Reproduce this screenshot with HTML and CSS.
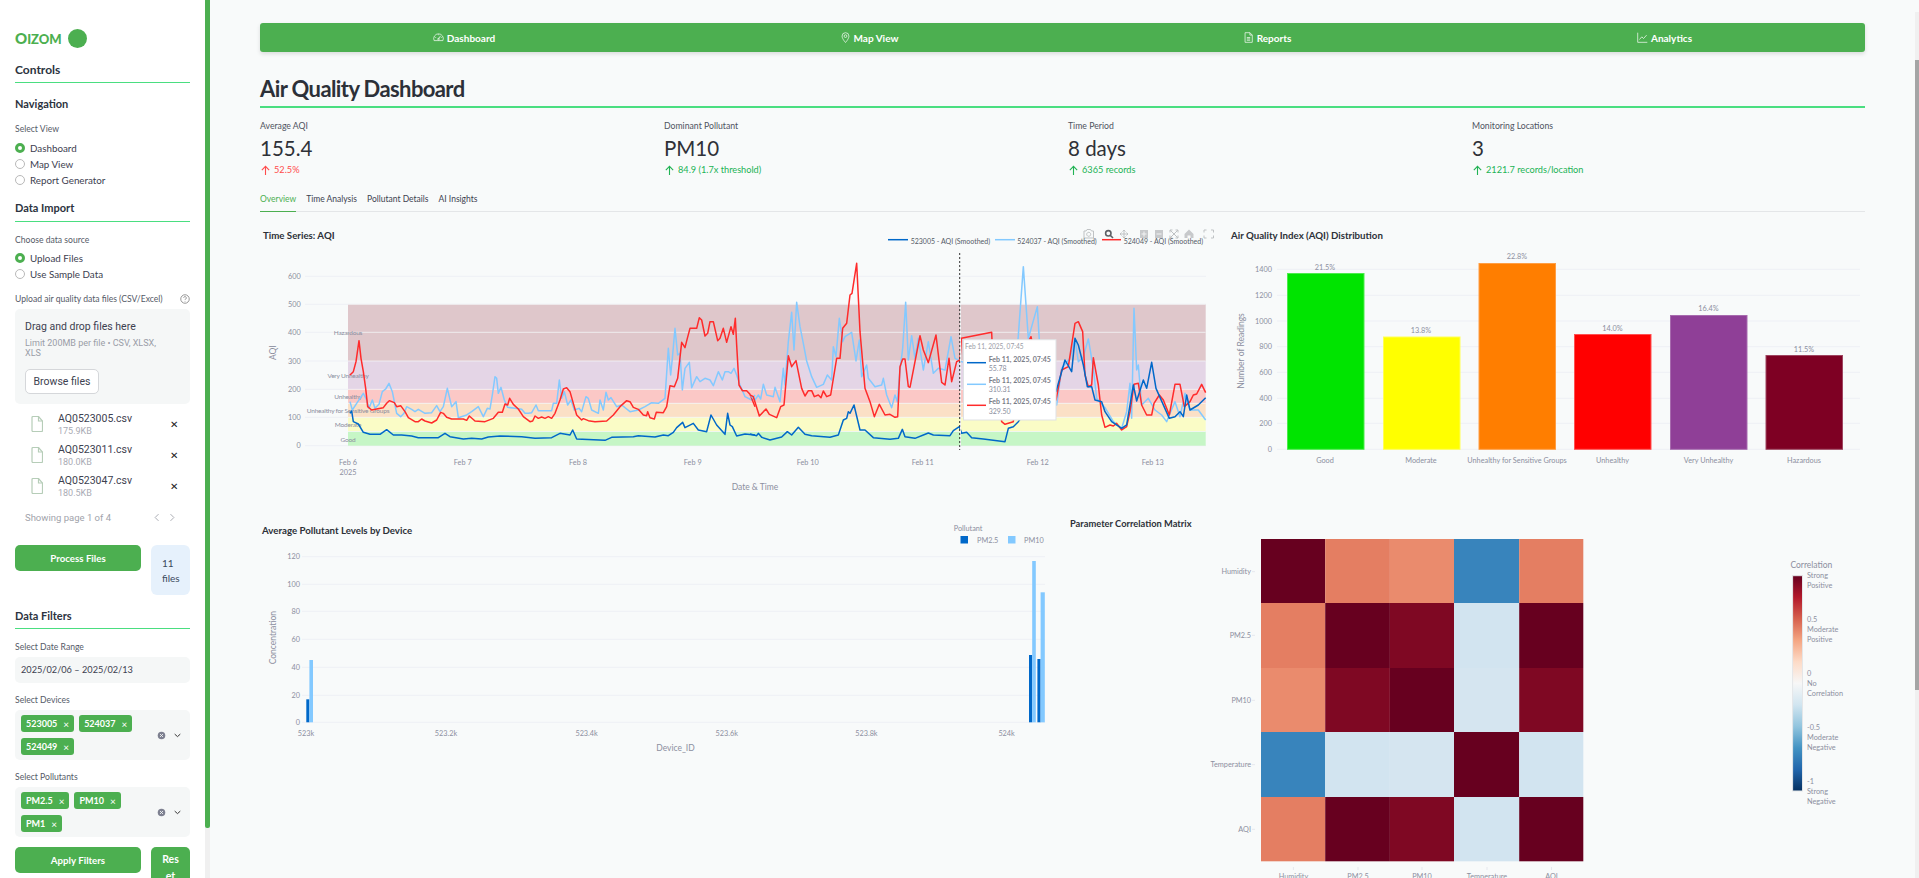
FILE: index.html
```html
<!DOCTYPE html>
<html lang="en">
<head>
<meta charset="utf-8">
<title>Air Quality Dashboard</title>
<link rel="stylesheet" href="styles.css">
</head>
<body>
<div class="app">
<aside class="sidebar">
  <div class="logo"><span class="logo-word">Oizom</span><span class="logo-dot"></span></div>
  <h2 class="sec sec-controls">Controls</h2>
  <h3 class="sub sub-nav">Navigation</h3>
  <div class="lbl lbl-view">Select View</div>
  <div class="radios radios-view">
    <div class="radio on"><i></i>Dashboard</div>
    <div class="radio"><i></i>Map View</div>
    <div class="radio"><i></i>Report Generator</div>
  </div>
  <h3 class="sub sec sec-import">Data Import</h3>
  <div class="lbl lbl-source">Choose data source</div>
  <div class="radios radios-source">
    <div class="radio on"><i></i>Upload Files</div>
    <div class="radio"><i></i>Use Sample Data</div>
  </div>
  <div class="lbl lbl-upload"><span>Upload air quality data files (CSV/Excel)</span>
    <svg class="help" viewBox="0 0 16 16"><circle cx="8" cy="8" r="6.8"/><path d="M5.9 6.2a2.1 2.1 0 1 1 3.2 1.8c-.7.4-1.1.8-1.1 1.7"/><path d="M8 11.4v.9"/></svg>
  </div>
  <div class="drop">
    <div class="drop-title">Drag and drop files here</div>
    <div class="drop-limit">Limit 200MB per file • CSV, XLSX, XLS</div>
    <button class="browse">Browse files</button>
  </div>
  <div class="files">
    <div class="file">
      <svg class="file-ic" viewBox="0 0 12 16"><path d="M1 1.5a1 1 0 0 1 1-1h5.5L11.5 5v9.5a1 1 0 0 1-1 1H2a1 1 0 0 1-1-1z"/><path d="M7.5.5V5h4"/></svg>
      <div class="file-txt"><div class="file-name">AQ0523005.csv</div><div class="file-size">175.9KB</div></div>
      <span class="file-x">✕</span>
    </div>
    <div class="file">
      <svg class="file-ic" viewBox="0 0 12 16"><path d="M1 1.5a1 1 0 0 1 1-1h5.5L11.5 5v9.5a1 1 0 0 1-1 1H2a1 1 0 0 1-1-1z"/><path d="M7.5.5V5h4"/></svg>
      <div class="file-txt"><div class="file-name">AQ0523011.csv</div><div class="file-size">180.0KB</div></div>
      <span class="file-x">✕</span>
    </div>
    <div class="file">
      <svg class="file-ic" viewBox="0 0 12 16"><path d="M1 1.5a1 1 0 0 1 1-1h5.5L11.5 5v9.5a1 1 0 0 1-1 1H2a1 1 0 0 1-1-1z"/><path d="M7.5.5V5h4"/></svg>
      <div class="file-txt"><div class="file-name">AQ0523047.csv</div><div class="file-size">180.5KB</div></div>
      <span class="file-x">✕</span>
    </div>
  </div>
  <div class="pager"><span>Showing page 1 of 4</span>
    <svg class="chev" viewBox="0 0 8 12"><path d="M6 1.5 1.5 6 6 10.5"/></svg>
    <svg class="chev" viewBox="0 0 8 12"><path d="M2 1.5 6.5 6 2 10.5"/></svg>
  </div>
  <div class="act-row act-process">
    <button class="btn btn-main">Process Files</button>
    <div class="count">11 files</div>
  </div>
  <h3 class="sub sec sec-filters">Data Filters</h3>
  <div class="lbl lbl-date">Select Date Range</div>
  <div class="date">2025/02/06 – 2025/02/13</div>
  <div class="lbl lbl-multi">Select Devices</div>
  <div class="multi">
    <div class="tags">
      <span class="tag">523005<b>×</b></span><span class="tag">524037<b>×</b></span><span class="tag">524049<b>×</b></span>
    </div>
    <svg class="clear" viewBox="0 0 10 10"><circle cx="5" cy="5" r="4.2"/><path d="M3.4 3.4l3.2 3.2M6.6 3.4 3.4 6.6"/></svg>
    <svg class="drop-chev" viewBox="0 0 10 6"><path d="M1 1l4 3.6L9 1"/></svg>
  </div>
  <div class="lbl lbl-multi">Select Pollutants</div>
  <div class="multi">
    <div class="tags">
      <span class="tag">PM2.5<b>×</b></span><span class="tag">PM10<b>×</b></span><span class="tag">PM1<b>×</b></span>
    </div>
    <svg class="clear" viewBox="0 0 10 10"><circle cx="5" cy="5" r="4.2"/><path d="M3.4 3.4l3.2 3.2M6.6 3.4 3.4 6.6"/></svg>
    <svg class="drop-chev" viewBox="0 0 10 6"><path d="M1 1l4 3.6L9 1"/></svg>
  </div>
  <div class="act-row act-apply">
    <button class="btn btn-main">Apply Filters</button>
    <button class="btn btn-reset">Res<wbr>et</button>
  </div>
</aside>
<div class="side-scroll"><div class="side-thumb"></div></div>

<main class="main">
  <nav class="topnav">
    <a class="tab-link"><svg viewBox="0 0 16 16"><path d="M1.6 12.5a7 7 0 1 1 12.8 0z"/><path d="M8 10l3-4.5"/><circle cx="8" cy="10.3" r="1.2"/><path d="M8 3.4v1.2M3.4 8h1.2M11.4 8h1.2"/></svg>Dashboard</a>
    <a class="tab-link"><svg viewBox="0 0 16 16"><path d="M8 15.3S13 9.8 13 6A5 5 0 0 0 3 6c0 3.8 5 9.3 5 9.3z"/><circle cx="8" cy="6" r="2"/></svg>Map View</a>
    <a class="tab-link"><svg viewBox="0 0 16 16"><path d="M3 1h7l3.5 3.5V15H3z"/><path d="M10 1v3.5h3.5M5.5 8h5M5.5 10h5M5.5 12h5"/></svg>Reports</a>
    <a class="tab-link"><svg viewBox="0 0 16 16"><path d="M1 1v14h14"/><path d="M3.5 11 7 7l2.500 2.500L14 4.500"/></svg>Analytics</a>
  </nav>
  <h1 class="title">Air Quality Dashboard</h1>
  <section class="metrics">
    <div class="metric"><div class="m-label">Average AQI</div><div class="m-value">155.4</div>
      <div class="m-delta bad"><svg viewBox="0 0 12 12"><path d="M6 11V1.500M2 5.500l4-4 4 4"/></svg>52.5%</div></div>
    <div class="metric"><div class="m-label">Dominant Pollutant</div><div class="m-value">PM10</div>
      <div class="m-delta good"><svg viewBox="0 0 12 12"><path d="M6 11V1.500M2 5.500l4-4 4 4"/></svg>84.9 (1.7x threshold)</div></div>
    <div class="metric"><div class="m-label">Time Period</div><div class="m-value">8 days</div>
      <div class="m-delta good"><svg viewBox="0 0 12 12"><path d="M6 11V1.500M2 5.500l4-4 4 4"/></svg>6365 records</div></div>
    <div class="metric"><div class="m-label">Monitoring Locations</div><div class="m-value">3</div>
      <div class="m-delta good"><svg viewBox="0 0 12 12"><path d="M6 11V1.500M2 5.500l4-4 4 4"/></svg>2121.7 records/location</div></div>
  </section>
  <div class="tabs">
    <span class="tab active">Overview</span><span class="tab">Time Analysis</span><span class="tab">Pollutant Details</span><span class="tab">AI Insights</span>
  </div>

  <div class="chart-row row-one">
    <svg class="chart chart-ts" viewBox="260 225 965 280">
      <text class="c-title" x="263" y="235">Time Series: AQI</text>
      <g class="grid">
        <path d="M305 276.300H1206M305 304.300H1206M305 332.300H1206M305 361H1206M305 389.300H1206M305 417.300H1206M305 445.700H1206"/>
      </g>
      <rect class="b6" x="348" y="304.300" width="857.700" height="56.700"/>
      <rect class="b5" x="348" y="361" width="857.700" height="28.300"/>
      <rect class="b4" x="348" y="389.300" width="857.700" height="14"/>
      <rect class="b3" x="348" y="403.300" width="857.700" height="14"/>
      <rect class="b2" x="348" y="417.300" width="857.700" height="14.200"/>
      <rect class="b1" x="348" y="431.500" width="857.700" height="14.200"/>
      <path class="band-line" d="M348 304.300H1205.700M348 332.300H1205.700M348 361H1205.700M348 389.300H1205.700M348 403.300H1205.700M348 417.300H1205.700M348 431.500H1205.700"/>
      <g class="tick tick-end">
        <text x="300.700" y="276.300">600</text><text x="300.700" y="304.300">500</text><text x="300.700" y="332.300">400</text><text x="300.700" y="361">300</text><text x="300.700" y="389.300">200</text><text x="300.700" y="417.300">100</text><text x="300.700" y="445.700">0</text>
      </g>
      <text class="a-title" transform="translate(273 352.700) rotate(-90)">AQI</text>
      <g class="tick tick-mid">
        <text x="348" y="462">Feb 6</text><text x="348" y="472">2025</text><text x="462.700" y="462">Feb 7</text><text x="578" y="462">Feb 8</text><text x="692.700" y="462">Feb 9</text><text x="807.700" y="462">Feb 10</text><text x="922.700" y="462">Feb 11</text><text x="1037.700" y="462">Feb 12</text><text x="1152.700" y="462">Feb 13</text>
      </g>
      <text class="a-title" x="755" y="487">Date &amp; Time</text>
      <g class="tick tick-mid band-label">
        <text x="348" y="332">Hazardous</text><text x="348" y="375">Very Unhealthy</text><text x="348" y="396">Unhealthy</text><text x="348" y="410">Unhealthy for Sensitive Groups</text><text x="348" y="424">Moderate</text><text x="348" y="439">Good</text>
      </g>
      <g transform="translate(255 225) scale(.33333)">
        <polyline class="s-light" points="285,530 292,555 305,535 325,505 335,525 342,550 352,525 360,550 372,538 382,500 392,492 402,475 412,500 425,565 437,575 447,565 455,545 470,553 480,560 490,553 510,565 530,563 545,542 555,560 565,545 577,490 590,545 603,530 610,578 635,570 650,560 670,545 685,575 697,550 705,552 712,510 720,455 725,460 730,505 738,487 748,525 758,547 780,550 800,553 810,565 820,565 830,563 843,540 850,557 890,557 895,535 905,535 913,465 920,520 928,500 938,540 948,525 958,555 972,550 980,560 993,515 1000,520 1010,555 1030,565 1035,525 1045,555 1053,502 1060,525 1068,518 1085,545 1100,540 1125,560 1150,555 1170,545 1190,533 1210,535 1230,520 1240,370 1247,450 1252,400 1260,310 1268,390 1275,385 1282,495 1290,430 1303,412 1310,488 1325,455 1335,470 1350,460 1365,465 1375,482 1390,440 1402,465 1410,440 1420,440 1428,445 1437,430 1445,450 1455,480 1470,515 1490,525 1500,510"/>
        <polyline class="s-red" points="285,450 295,440 303,410 312,347 318,400 325,440 332,490 338,545 350,555 365,552 385,548 395,535 403,527 418,533 425,545 437,542 450,560 460,578 480,590 490,590 500,582 510,588 530,594 545,585 557,562 565,565 575,577 590,582 625,582 635,586 643,573 660,588 690,590 715,580 730,562 742,562 750,537 758,540 764,520 775,538 790,552 805,575 825,590 833,588 840,573 850,580 860,576 870,580 880,575 890,580 900,565 915,525 925,492 935,488 945,500 955,535 965,570 980,585 985,581 1000,587 1020,590 1055,588 1075,570 1095,545 1115,527 1125,530 1135,547 1150,553 1165,570 1175,572 1178,560 1185,578 1198,582 1204,562 1225,563 1235,545 1245,482 1258,485 1268,460 1280,352 1290,368 1297,340 1305,310 1325,310 1333,278 1340,285 1350,333 1358,325 1365,290 1375,290 1388,347 1395,340 1405,310 1415,352 1428,305 1435,328 1441,280 1445,360 1452,480 1462,497 1475,497 1485,508 1500,545"/>
        <polyline class="s-blue" points="285,565 290,558 295,590 310,597 325,622 345,628 375,628 395,614 415,630 440,630 470,633 490,638 550,638 570,625 585,635 625,642 650,640 680,642 700,636 735,633 800,635 840,640 890,638 915,625 945,630 953,615 965,642 1050,646 1070,637 1135,635 1150,632 1200,636 1225,630 1240,632 1255,622 1265,608 1283,592 1290,608 1315,595 1330,615 1355,620 1368,570 1385,600 1410,628 1418,565 1425,600 1432,605 1445,633 1470,627 1500,630"/>
      </g>
      <g transform="translate(750 225) scale(.33333)">
        <polyline class="s-light" points="0,510 15,525 25,510 32,522 40,478 50,510 70,515 75,487 90,530 100,430 105,480 115,350 125,262 132,375 140,232 150,305 160,355 170,408 185,455 200,487 220,478 232,450 245,465 250,365 258,395 268,280 278,350 285,335 305,322 318,408 328,345 335,455 350,420 355,460 375,485 395,480 400,460 410,510 425,548 435,510 442,530 450,435 458,370 467,232 475,405 485,332 495,400 505,340 520,435 535,350 550,445 565,430 585,435 603,335 615,400 635,410 700,420 760,430 800,400 820,125 835,340 862,245 870,380 890,400 920,540 935,430 960,400 975,340 985,410 1000,395 1015,342 1030,430 1040,520 1065,548 1090,590 1115,610 1130,560 1140,475 1145,580 1152,250 1160,435 1165,420 1175,540 1195,520 1215,555 1235,570 1250,590 1260,565 1275,530 1290,575 1305,505 1320,555 1345,555 1367,585"/>
        <polyline class="s-red" points="0,510 10,515 28,573 48,552 58,568 80,578 92,545 102,540 115,392 125,425 138,407 155,490 165,513 175,497 185,497 193,515 205,510 213,518 220,498 230,515 242,510 260,400 270,400 278,310 290,295 300,210 306,205 320,115 330,320 345,490 360,530 373,575 388,538 405,570 420,568 435,577 443,575 450,425 458,402 465,402 475,485 480,487 495,410 510,332 520,375 535,413 558,330 575,472 585,480 597,400 605,470 620,410 630,405 634,340 725,322 727,370 755,590 765,598 790,590 810,400 843,335 860,420 918,525 935,435 955,425 975,295 985,290 998,320 1005,450 1015,485 1025,480 1030,398 1045,480 1055,570 1065,607 1080,600 1090,603 1100,595 1115,615 1130,605 1140,560 1152,478 1165,475 1175,540 1190,570 1205,570 1212,535 1228,510 1240,525 1258,570 1275,478 1290,478 1303,545 1320,530 1330,510 1340,507 1355,478 1367,503"/>
        <polyline class="s-blue" points="0,627 20,632 25,625 35,637 60,645 95,636 112,620 125,630 145,607 165,628 185,632 240,637 265,630 280,585 290,580 295,560 300,565 312,540 330,615 345,615 370,638 420,643 445,640 457,613 465,635 495,640 520,630 535,624 550,630 600,632 610,617 628,605 635,625 650,622 665,638 700,642 765,650 775,610 790,605 805,590 850,530 918,500 945,405 965,440 975,340 985,360 1000,420 1012,485 1025,485 1035,525 1055,530 1065,560 1085,590 1115,610 1130,600 1150,480 1160,528 1180,465 1190,490 1205,412 1218,490 1258,580 1275,575 1290,560 1300,575 1310,510 1320,555 1345,540 1367,518"/>
      </g>
      <path class="hover-white" d="M960.500 304V446"/>
      <path class="hover-line" d="M959.700 253V450"/>
      <g class="modebar">
        <path d="M1084 231h2l1-1.500h3.500l1 1.500h2v7h-9.500zM1088.700 232.300a2 2 0 1 0 .01 0z"/>
        <path d="M1120 234h8M1124 230v8M1120 234l1.500-1.500M1120 234l1.500 1.500M1128 234l-1.500-1.500M1128 234l-1.500 1.500M1124 230l-1.500 1.500M1124 230l1.500 1.500M1124 238l-1.500-1.500M1124 238l1.500-1.500"/>
        <path class="mb-solid" d="M1140 230h8v8h-8zM1155 230h8v8h-8z"/>
        <path class="mb-w" d="M1144 231.500v5M1141.500 234h5M1156.500 234h5"/>
        <path d="M1170 230l8 8M1178 230l-8 8M1170 230h2.500M1170 230v2.500M1178 238h-2.500M1178 238v-2.500M1178 230h-2.500M1178 230v2.500M1170 238h2.500M1170 238v-2.500"/>
        <path class="mb-solid" d="M1184.500 234l4.500-4.500 4.500 4.500v4h-3v-2.500h-3v2.500h-3z"/>
        <path d="M1204 232.500v-2.500h2.500M1211 230h2.500v2.500M1213.500 235.500v2.500H1211M1206.500 238H1204v-2.500"/>
      </g>
      <g class="mb-dark">
        <circle cx="1108.300" cy="233.300" r="2.700"/><path d="M1110.200 235.200l2.800 2.800"/>
      </g>
      <path class="s-blue" d="M888 239.700h20"/><path class="s-light" d="M995 239.700h20"/><path class="s-red" d="M1102 239.700h19"/>
      <g class="legend">
        <text x="910.700" y="240.500">523005 - AQI (Smoothed)</text><text x="1017.300" y="240.500">524037 - AQI (Smoothed)</text><text x="1123.700" y="240.500">524049 - AQI (Smoothed)</text>
      </g>
      <rect class="tip" x="963.500" y="339.700" width="92.500" height="80.300"/>
      <g class="tip-text">
        <text class="tip-head" x="965" y="346.300">Feb 11, 2025, 07:45</text>
        <path class="s-blue" d="M967 362.700h19"/><path class="s-light" d="M967 384.300h19"/><path class="s-red" d="M967 405.300h19"/>
        <text class="tip-b" x="988.700" y="358.700">Feb 11, 2025, 07:45</text><text x="988.700" y="368.300">55.78</text>
        <text class="tip-b" x="988.700" y="380.300">Feb 11, 2025, 07:45</text><text x="988.700" y="389.300">310.31</text>
        <text class="tip-b" x="988.700" y="401.300">Feb 11, 2025, 07:45</text><text x="988.700" y="411.300">329.50</text>
      </g>
    </svg>

    <svg class="chart chart-dist" viewBox="1225 225 640 280">
      <text class="c-title" x="1231" y="235">Air Quality Index (AQI) Distribution</text>
      <path class="grid-line" d="M1277 269.300H1860M1277 295.300H1860M1277 321H1860M1277 346.700H1860M1277 372.300H1860M1277 398.300H1860M1277 423.300H1860M1277 449.300H1860"/>
      <g class="tick tick-end">
        <text x="1272" y="269.300">1400</text><text x="1272" y="295.300">1200</text><text x="1272" y="321">1000</text><text x="1272" y="346.700">800</text><text x="1272" y="372.300">600</text><text x="1272" y="398.300">400</text><text x="1272" y="423.300">200</text><text x="1272" y="449.300">0</text>
      </g>
      <text class="a-title" transform="translate(1241 351) rotate(-90)">Number of Readings</text>
      <rect class="bar bar-good" x="1287.500" y="273.500" width="76.500" height="175.800"/>
      <rect class="bar bar-mod" x="1383.500" y="337" width="76.500" height="112.300"/>
      <rect class="bar bar-usg" x="1479" y="263.500" width="76.500" height="185.800"/>
      <rect class="bar bar-unh" x="1574.500" y="334.500" width="76.500" height="114.800"/>
      <rect class="bar bar-vun" x="1670.500" y="315.500" width="76.500" height="133.800"/>
      <rect class="bar bar-haz" x="1766" y="355.500" width="76.500" height="93.800"/>
      <g class="tick tick-mid">
        <text x="1325" y="267.500">21.5%</text><text x="1421" y="330.500">13.8%</text><text x="1517" y="256.500">22.8%</text><text x="1612.500" y="328.500">14.0%</text><text x="1708.500" y="308.500">16.4%</text><text x="1804" y="349">11.5%</text>
        <text x="1325" y="460.500">Good</text><text x="1421" y="460.500">Moderate</text><text x="1517" y="460.500">Unhealthy for Sensitive Groups</text><text x="1612.500" y="460.500">Unhealthy</text><text x="1708.500" y="460.500">Very Unhealthy</text><text x="1804" y="460.500">Hazardous</text>
      </g>
    </svg>
  </div>

  <div class="chart-row row-two">
    <svg class="chart chart-dev" viewBox="260 505 800 373">
      <text class="c-title" x="262" y="530">Average Pollutant Levels by Device</text>
      <path class="grid-line" d="M302 556.700H1045M302 584.300H1045M302 611.300H1045M302 639.300H1045M302 667.300H1045M302 695.300H1045M302 722.300H1045"/>
      <g class="tick tick-end">
        <text x="300" y="556.700">120</text><text x="300" y="584.300">100</text><text x="300" y="611.300">80</text><text x="300" y="639.300">60</text><text x="300" y="667.300">40</text><text x="300" y="695.300">20</text><text x="300" y="722.300">0</text>
      </g>
      <text class="a-title" transform="translate(273 637.700) rotate(-90)">Concentration</text>
      <g class="tick tick-mid">
        <text x="306" y="733.700">523k</text><text x="446" y="733.700">523.2k</text><text x="586.600" y="733.700">523.4k</text><text x="726.800" y="733.700">523.6k</text><text x="866.400" y="733.700">523.8k</text><text x="1006.600" y="733.700">524k</text>
      </g>
      <text class="a-title" x="675.500" y="748">Device_ID</text>
      <g class="dev-dark"><rect x="306.300" y="699.300" width="3.100" height="23"/><rect x="1029" y="655" width="3.200" height="67.300"/><rect x="1037.400" y="659" width="3.200" height="63.300"/></g>
      <g class="dev-light"><rect x="309.400" y="660" width="3.600" height="62.300"/><rect x="1032.200" y="561" width="3.600" height="161.300"/><rect x="1040.600" y="592.300" width="4.200" height="130"/></g>
      <text class="tick" x="953.700" y="528.700">Pollutant</text>
      <rect class="dev-dark" x="960.500" y="536" width="7.500" height="7.500"/><rect class="dev-light" x="1008" y="536" width="7.500" height="7.500"/>
      <g class="tick"><text x="977" y="540">PM2.5</text><text x="1024" y="540">PM10</text></g>
    </svg>

    <svg class="chart chart-corr" viewBox="1060 505 805 373">
      <defs>
        <linearGradient id="rdbu" x1="0" y1="0" x2="0" y2="1">
          <stop offset="0" stop-color="#67001f"/><stop offset=".1" stop-color="#b2182b"/><stop offset=".2" stop-color="#d6604d"/><stop offset=".3" stop-color="#f4a582"/><stop offset=".4" stop-color="#fddbc7"/><stop offset=".5" stop-color="#f7f7f7"/><stop offset=".6" stop-color="#d1e5f0"/><stop offset=".7" stop-color="#92c5de"/><stop offset=".8" stop-color="#4393c3"/><stop offset=".9" stop-color="#2166ac"/><stop offset="1" stop-color="#053061"/>
        </linearGradient>
      </defs>
      <text class="c-title c-title-sm" x="1070" y="523">Parameter Correlation Matrix</text>
      <g class="heat">
        <rect class="h-max" x="1261" y="539" width="64.200" height="64"/><rect class="h-a" x="1325.200" y="539" width="64.700" height="64"/><rect class="h-b" x="1389.900" y="539" width="64.100" height="64"/><rect class="h-neg" x="1454" y="539" width="65.200" height="64"/><rect class="h-a" x="1519.200" y="539" width="64.100" height="64"/>
        <rect class="h-a" x="1261" y="603" width="64.200" height="65"/><rect class="h-max" x="1325.200" y="603" width="64.700" height="65"/><rect class="h-hi" x="1389.900" y="603" width="64.100" height="65"/><rect class="h-c" x="1454" y="603" width="65.200" height="65"/><rect class="h-max" x="1519.200" y="603" width="64.100" height="65"/>
        <rect class="h-b" x="1261" y="668" width="64.200" height="64"/><rect class="h-hi" x="1325.200" y="668" width="64.700" height="64"/><rect class="h-max" x="1389.900" y="668" width="64.100" height="64"/><rect class="h-d" x="1454" y="668" width="65.200" height="64"/><rect class="h-hi" x="1519.200" y="668" width="64.100" height="64"/>
        <rect class="h-neg" x="1261" y="732" width="64.200" height="65"/><rect class="h-c" x="1325.200" y="732" width="64.700" height="65"/><rect class="h-d" x="1389.900" y="732" width="64.100" height="65"/><rect class="h-max" x="1454" y="732" width="65.200" height="65"/><rect class="h-c" x="1519.200" y="732" width="64.100" height="65"/>
        <rect class="h-a" x="1261" y="797" width="64.200" height="64.300"/><rect class="h-max" x="1325.200" y="797" width="64.700" height="64.300"/><rect class="h-hi" x="1389.900" y="797" width="64.100" height="64.300"/><rect class="h-c" x="1454" y="797" width="65.200" height="64.300"/><rect class="h-max" x="1519.200" y="797" width="64.100" height="64.300"/>
      </g>
      <g class="tick tick-end">
        <text x="1251" y="571.700">Humidity</text><text x="1251" y="635.300">PM2.5</text><text x="1251" y="700.300">PM10</text><text x="1251" y="764.700">Temperature</text><text x="1251" y="829.300">AQI</text>
      </g>
      <path class="tick-mark" d="M1252 571.700h3M1252 635.300h3M1252 700.300h3M1252 764.700h3M1252 829.300h3M1293.400 867v3M1358 867v3M1422 867v3M1487 867v3M1551.500 867v3"/>
      <g class="tick tick-mid">
        <text x="1293.400" y="876">Humidity</text><text x="1358" y="876">PM2.5</text><text x="1422" y="876">PM10</text><text x="1487" y="876">Temperature</text><text x="1551.500" y="876">AQI</text>
      </g>
      <text class="a-title a-start" x="1790.400" y="565">Correlation</text>
      <rect class="cbar" x="1792.600" y="575.700" width="9.900" height="215.300"/>
      <g class="tick">
        <text x="1807" y="575.700">Strong</text><text x="1807" y="585.700">Positive</text><text x="1807" y="619.700">0.5</text><text x="1807" y="629.700">Moderate</text><text x="1807" y="639.700">Positive</text><text x="1807" y="673.700">0</text><text x="1807" y="683.700">No</text><text x="1807" y="693.700">Correlation</text><text x="1807" y="727.700">-0.5</text><text x="1807" y="737.700">Moderate</text><text x="1807" y="747">Negative</text><text x="1807" y="781.700">-1</text><text x="1807" y="791">Strong</text><text x="1807" y="801">Negative</text>
      </g>
    </svg>
  </div>
</main>
<div class="page-scroll"><div class="page-thumb"></div></div>
</div>
</body>
</html>
```
FILE: styles.css
```css
* { box-sizing: border-box; }
html, body { margin: 0; padding: 0; height: 878px; overflow: hidden; background: #f8fafa; }
body { font-family: Lato, "Noto Sans", sans-serif; color: #31333f; }
.app { display: flex; height: 878px; overflow: hidden; }

.sidebar { width: 205px; flex: none; height: 878px; overflow: hidden; background: #fff; padding: 28px 15px 0; }
.side-scroll { width: 5px; flex: none; background: #f0f0f0; }
.side-thumb { height: 828px; background: #4caf50; border-radius: 0 0 2px 2px; }

.logo { display: flex; align-items: center; height: 20px; gap: 6px; }
.logo-word { text-transform: uppercase; font-weight: 900; font-size: 13px; line-height: 20px; color: #4caf50; }
.logo-word::first-letter { font-size: 15px; }
.logo-dot { width: 19px; height: 19px; border-radius: 50%; background: #4caf50; }

.sec, .sub { margin: 0; font-size: 11px; font-weight: 700; line-height: 16px; color: #2c3340; }
.sec { padding-bottom: 4px; border-bottom: 1px solid #4ade80; }
.sec-controls { margin-top: 14px; font-size: 12px; }
.sub-nav { margin-top: 13px; }
.sec-import { margin-top: 12px; padding-bottom: 5px; }
.sec-filters { margin-top: 13px; }

.lbl { font-size: 8.6px; line-height: 12px; color: #555a67; }
.lbl-view { margin-top: 11px; }
.lbl-source { margin-top: 12px; }
.lbl-upload { margin-top: 11px; display: flex; justify-content: space-between; align-items: center; }
.lbl-date { margin-top: 12px; }
.lbl-multi { margin-top: 11px; }
.help { width: 10px; height: 10px; fill: none; stroke: #777; stroke-width: 1.2; }

.radios-view { margin-top: 5px; }
.radios-source { margin-top: 4px; }
.radio { display: flex; align-items: center; gap: 5px; height: 16px; font-size: 9.8px; color: #3d4150; }
.radio i { width: 10px; height: 10px; flex: none; border-radius: 50%; border: 1px solid #b9b9b9; background: #fff; }
.radio.on i { border: 3px solid #4caf50; }

.drop { margin-top: 4px; height: 95px; padding: 11px 10px 0; background: #f5f7f7; border-radius: 5px; }
.drop-title { font-family: Roboto, sans-serif; font-size: 10.5px; line-height: 14px; color: #3d4150; }
.drop-limit { margin-top: 4px; max-width: 143px; font-family: Roboto, sans-serif; font-size: 9px; line-height: 10px; color: #9a9da7; }
.browse { display: block; margin-top: 11px; width: 74px; height: 25px; padding: 0; background: #fff; border: 1px solid #d5d7da; border-radius: 5px; font-family: Roboto, sans-serif; font-size: 10.5px; color: #3d4150; }

.files { margin-top: 5px; }
.file { display: flex; height: 31px; padding: 3px 0 0 16px; }
.file-ic { width: 12px; height: 16px; margin-top: 4px; fill: none; stroke: #b6cdb8; stroke-width: 1.2; flex: none; }
.file-txt { margin-left: 15px; flex: 1; font-family: Roboto, sans-serif; line-height: 13px; }
.file-name { font-size: 10.5px; color: #3d4150; }
.file-size { font-size: 9px; color: #a9abb4; }
.file-x { width: 20px; margin-top: 6px; font-size: 10px; line-height: 12px; color: #222; }

.pager { display: flex; align-items: center; margin-top: 8px; padding-left: 10px; height: 14px; font-family: Roboto, sans-serif; font-size: 9.5px; color: #a1a3ab; }
.pager span { flex: 1; }
.chev { width: 6px; height: 9px; fill: none; stroke: #a9abb2; stroke-width: 1.3; margin-right: 9px; }
.chev:last-child { margin-right: 15px; }

.act-row { display: flex; gap: 10px; align-items: flex-start; }
.act-process { margin-top: 21px; }
.act-apply { margin-top: 10px; }
.btn { height: 26px; border: 0; border-radius: 5px; padding: 0; background: #4caf50; color: #fff; font-family: Lato, sans-serif; font-weight: 700; font-size: 9.7px; }
.btn-main { width: 126px; }
.btn-reset { width: 39px; height: 42px; padding: 4px 10px; line-height: 17px; font-size: 10.5px; }
.count { width: 39px; height: 50px; padding: 11px 11px 0; background: #e6f1fc; border-radius: 6px; font-size: 10px; line-height: 15px; color: #3a4a5c; }

.date { margin-top: 4px; height: 26px; padding: 0 6px; background: #f5f7f7; border-radius: 5px; font-size: 9.2px; line-height: 26px; color: #3d4150; }
.multi { display: flex; align-items: center; margin-top: 4px; height: 50px; padding: 5px 6px; background: #f5f7f7; border-radius: 5px; }
.tags { width: 134px; flex: none; display: flex; flex-wrap: wrap; gap: 6px 5px; }
.tag { display: inline-flex; align-items: center; justify-content: space-between; height: 17px; padding: 0 5px; background: #4caf50; border-radius: 3px; color: #fff; font-size: 9px; font-weight: 700; }
.tag b { margin-left: 6px; font-weight: 400; font-size: 10px; }
.clear { width: 9px; height: 9px; margin-left: 2px; flex: none; }
.clear circle { fill: #7d8090; }
.clear path { stroke: #f5f7f7; stroke-width: 1; }
.drop-chev { width: 7px; height: 5px; margin-left: 8px; flex: none; fill: none; stroke: #333; stroke-width: 1.4; }

.main { flex: 1; min-width: 0; height: 878px; overflow: hidden; padding: 23px 50px 0; }
.topnav { display: grid; grid-template-columns: 408px 402px 394px 401px; height: 29px; background: #4caf50; border-radius: 3px; box-shadow: 0 2px 4px rgba(0,0,0,.12); }
.tab-link { display: flex; align-items: center; justify-content: center; gap: 3px; color: #fff; font-size: 10px; font-weight: 700; }
.tab-link svg { width: 11px; height: 11px; fill: none; stroke: #fff; stroke-width: 1; }
.title { margin: 20px 0 0; height: 36px; font-size: 22px; letter-spacing: -.6px; line-height: 34px; font-weight: 700; color: #2c3038; border-bottom: 2px solid #4ade80; }
.metrics { display: grid; grid-template-columns: repeat(4, 393px); column-gap: 11px; margin-top: 11px; }
.m-label { font-size: 8.7px; line-height: 14px; color: #4f5360; }
.m-value { font-size: 20.5px; line-height: 30px; color: #2f3137; }
.m-delta { display: flex; align-items: center; gap: 3px; font-size: 9.2px; line-height: 14px; }
.m-delta svg { width: 11px; height: 11px; fill: none; stroke: currentColor; stroke-width: 1.2; }
.bad { color: #ff4b4b; }
.good { color: #21b354; }
.tabs { display: flex; gap: 10px; margin-top: 13px; height: 22px; border-bottom: 1px solid #e4e6e8; }
.tab { height: 22px; line-height: 18px; font-size: 8.5px; color: #3d4150; }
.tab.active { color: #4caf50; border-bottom: 1px solid #4caf50; }

.chart-row { display: flex; }
.row-one { margin-top: 13px; height: 280px; }
.row-two { height: 373px; }
.chart { display: block; flex: none; overflow: hidden; }
.chart-ts { width: 965px; height: 280px; }
.chart-dist { width: 640px; height: 280px; }
.chart-dev { width: 800px; height: 373px; }
.chart-corr { width: 805px; height: 373px; }
.chart text { dominant-baseline: central; }

.c-title { font-size: 9.7px; font-weight: 700; fill: #2c3038; }
.c-title-sm { font-size: 9.3px; }
.tick text, text.tick { font-size: 7.3px; fill: #8c8fa0; }
.tick-end text { text-anchor: end; }
.tick-mid text { text-anchor: middle; }
.tick.band-label text { fill: #8a8d9e; font-size: 6.5px; letter-spacing: -.2px; }
.a-title { font-size: 8.5px; fill: #8c8fa0; text-anchor: middle; }
.a-start { text-anchor: start; }
.grid path, .grid-line { fill: none; stroke: #eef0f6; stroke-width: 1; }
.b6 { fill: #dfc7cb; } .b5 { fill: #e4d5e6; } .b4 { fill: #fbc8c6; } .b3 { fill: #fbe0c6; } .b2 { fill: #fafcc6; } .b1 { fill: #c6f6c6; }
.band-line { fill: none; stroke: #f4f5f7; stroke-width: .8; }
.s-blue, .s-light, .s-red { fill: none; stroke-width: 1.5; vector-effect: non-scaling-stroke; stroke-linejoin: round; }
.s-blue { stroke: #0068c9; }
.s-light { stroke: #83c9ff; }
.s-red { stroke: #ff2b2b; }
.hover-white { stroke: #f4f5f7; stroke-width: 1; fill: none; }
.hover-line { stroke: #333; stroke-width: 1; stroke-dasharray: 2 2; fill: none; }
.modebar path { fill: none; stroke: #bfc2c4; stroke-width: 1; }
.modebar .mb-solid { fill: #c7c9cb; stroke: none; }
.modebar .mb-w { stroke: #f2f3f3; }
.mb-dark circle, .mb-dark path { fill: none; stroke: #5d6065; stroke-width: 1.6; }
.legend text { font-size: 7px; fill: #555a67; }
.tip { fill: #fff; stroke: #dfe1e4; stroke-width: 1; }
.tip-text text { font-size: 7px; fill: #8c8fa0; }
.tip-text .tip-b { font-weight: 700; fill: #7a7d88; }
.tip-text .tip-head { fill: #9a9ca6; font-size: 6.6px; }
.bar { stroke-width: 1; }
.bar-good { fill: #00e400; stroke: #4cec4c; }
.bar-mod { fill: #ffff00; stroke: #ffff55; }
.bar-usg { fill: #ff7e00; stroke: #ff9e44; }
.bar-unh { fill: #ff0000; stroke: #ff5050; }
.bar-vun { fill: #8f3f97; stroke: #a76bae; }
.bar-haz { fill: #7e0023; stroke: #9e4560; }
.dev-dark { fill: #0068c9; }
.dev-light { fill: #83c9ff; }
.h-max { fill: #67001f; } .h-hi { fill: #7f0823; } .h-a { fill: #e47e62; } .h-b { fill: #ea8b6d; } .h-neg { fill: #3884bc; } .h-c { fill: #d2e4f0; } .h-d { fill: #d5e5f0; }
.tick-mark { fill: none; stroke: #e6e8ee; stroke-width: 1; }
.cbar { fill: url(#rdbu); stroke: #e4e6e8; stroke-width: 1; }

.page-scroll { width: 4px; flex: none; margin-top: 12px; background: #f0f0f0; }
.page-thumb { margin-top: 48px; height: 630px; background: #a5a5a5; }
```
